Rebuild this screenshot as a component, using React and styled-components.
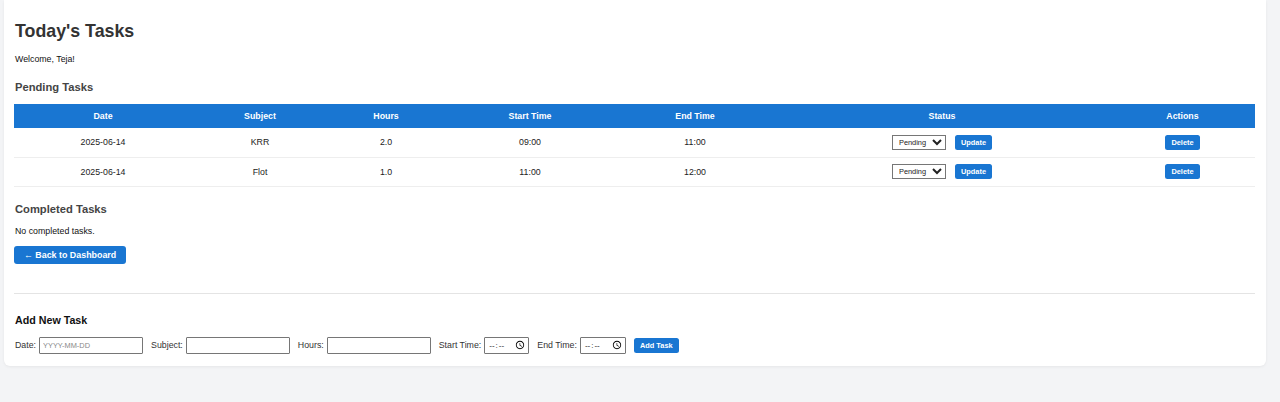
import React from "react";
import styled, { createGlobalStyle } from "styled-components";

const Global = createGlobalStyle`
  html, body { margin: 0; padding: 0; background: #f3f4f6; }
  body { font-family: "Liberation Sans", Arial, sans-serif; color: #111; }
  * { box-sizing: border-box; }
`;

const Page = styled.div`
  padding: 0 14px 36px 4px;
`;

const Card = styled.div`
  background: #fff;
  border-radius: 0 0 6px 6px;
  box-shadow: 0 1px 3px rgba(0, 0, 0, 0.06);
  padding: 0 11px 12px 10px;
  display: flex;
  flex-direction: column;
`;

const Title = styled.h1`
  margin: 19px 0 0 1px;
  font-size: 17.8px;
  line-height: 24px;
  font-weight: 700;
  color: #333;
`;

const Text = styled.p`
  margin: ${(p) => p.$mt}px 0 0 1px;
  font-size: 8.8px;
  line-height: 12px;
  color: #111;
`;

const Heading = styled.h2`
  margin: ${(p) => p.$mt}px 0 0 1px;
  font-size: ${(p) => p.$size || 11.2}px;
  line-height: 14px;
  font-weight: 700;
  color: ${(p) => p.$color || "#444"};
`;

const Table = styled.table`
  margin-top: 10px;
  width: 100%;
  border-collapse: collapse;
  table-layout: fixed;
  font-size: 8.8px;
`;

const Th = styled.th`
  background: #1976d2;
  color: #fff;
  font-weight: 700;
  height: 24px;
  padding: 0;
  text-align: center;
`;

const Td = styled.td`
  height: 29px;
  padding: 0;
  text-align: center;
  border-bottom: 1px solid #eee;
  color: #222;
`;

const StatusBox = styled.div`
  display: flex;
  justify-content: center;
  align-items: center;
  gap: 9px;
`;

const Select = styled.select`
  width: 54px;
  height: 15px;
  font-family: "Liberation Sans", Arial, sans-serif;
  font-size: 7.4px;
  padding: 0 2px;
  border: 1px solid #767676;
  border-radius: 0;
  background: #fff;
  color: #222;
`;

const Button = styled.button`
  background: #1976d2;
  color: #fff;
  border: none;
  border-radius: ${(p) => (p.$big ? 3 : 2.5)}px;
  font-family: "Liberation Sans", Arial, sans-serif;
  font-weight: 700;
  font-size: ${(p) => (p.$big ? 8.9 : 7.4)}px;
  height: ${(p) => (p.$big ? 18 : 15)}px;
  padding: 0 ${(p) => (p.$big ? 10 : 6)}px;
  cursor: pointer;
  white-space: nowrap;
`;

const BackRow = styled.div`
  margin-top: 9px;
  display: flex;
`;

const Divider = styled.hr`
  margin: 29px 0 0 0;
  border: none;
  border-top: 1px solid #e4e4e4;
  height: 0;
`;

const Form = styled.form`
  margin-top: 10px;
  display: flex;
  align-items: center;
  gap: 8px;
  padding-left: 1px;
`;

const Field = styled.label`
  display: flex;
  align-items: center;
  gap: 3px;
  font-size: 8.8px;
  color: #333;
`;

const Input = styled.input`
  width: ${(p) => p.$w}px;
  height: 17px;
  border: 1px solid #767676;
  border-radius: 1px;
  padding: 0 3px;
  font-family: "Liberation Sans", Arial, sans-serif;
  font-size: 7.4px;
  color: #222;
  &::placeholder { color: #888; }
  &::-webkit-datetime-edit { padding: 0; font-size: 8px; letter-spacing: 1px; }
  &::-webkit-datetime-edit-ampm-field { display: none; }
  &::-webkit-calendar-picker-indicator {
    margin: 0 0 0 2px;
    padding: 0;
    width: 10px;
    height: 10px;
  }
`;

const tasks = [
  { date: "2025-06-14", subject: "KRR", hours: "2.0", start: "09:00", end: "11:00" },
  { date: "2025-06-14", subject: "Flot", hours: "1.0", start: "11:00", end: "12:00" },
];

const widths = [178, 136, 116, 172, 158, 336, 145];
const heads = ["Date", "Subject", "Hours", "Start Time", "End Time", "Status", "Actions"];

export default function App() {
  return (
    <>
      <Global />
      <Page>
        <Card>
          <Title>Today's Tasks</Title>
          <Text $mt={10}>Welcome, Teja!</Text>
          <Heading $mt={15}>Pending Tasks</Heading>
          <Table>
            <colgroup>
              {widths.map((w, i) => (
                <col key={i} style={{ width: w }} />
              ))}
            </colgroup>
            <thead>
              <tr>
                {heads.map((h) => (
                  <Th key={h}>{h}</Th>
                ))}
              </tr>
            </thead>
            <tbody>
              {tasks.map((t, i) => (
                <tr key={i}>
                  <Td>{t.date}</Td>
                  <Td>{t.subject}</Td>
                  <Td>{t.hours}</Td>
                  <Td>{t.start}</Td>
                  <Td>{t.end}</Td>
                  <Td>
                    <StatusBox>
                      <Select defaultValue="Pending">
                        <option>Pending</option>
                        <option>Completed</option>
                      </Select>
                      <Button type="button">Update</Button>
                    </StatusBox>
                  </Td>
                  <Td>
                    <Button type="button">Delete</Button>
                  </Td>
                </tr>
              ))}
            </tbody>
          </Table>
          <Heading $mt={15}>Completed Tasks</Heading>
          <Text $mt={9}>No completed tasks.</Text>
          <BackRow>
            <Button type="button" $big>← Back to Dashboard</Button>
          </BackRow>
          <Divider />
          <Heading $mt={19} $size={10.7} $color="#111">Add New Task</Heading>
          <Form onSubmit={(e) => e.preventDefault()}>
            <Field>
              Date: <Input $w={104} type="text" placeholder="YYYY-MM-DD" />
            </Field>
            <Field>
              Subject: <Input $w={104} type="text" />
            </Field>
            <Field>
              Hours: <Input $w={104} type="number" />
            </Field>
            <Field>
              Start Time: <Input $w={45} type="time" />
            </Field>
            <Field>
              End Time: <Input $w={46} type="time" />
            </Field>
            <Button type="submit">Add Task</Button>
          </Form>
        </Card>
      </Page>
    </>
  );
}
